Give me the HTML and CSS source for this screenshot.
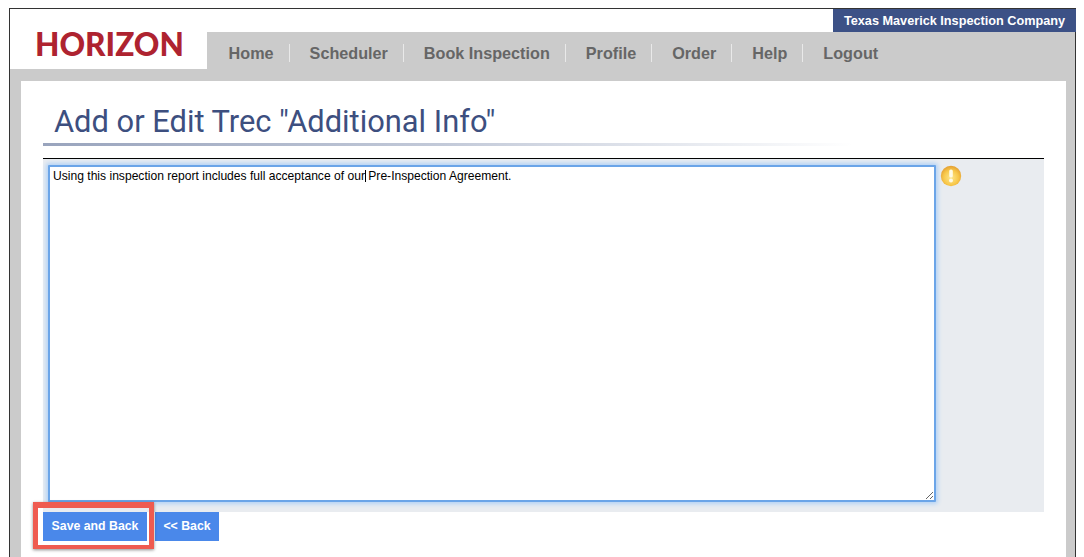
FILE: index.html
```html
<!DOCTYPE html>
<html lang="en">
<head>
<meta charset="utf-8">
<title>Add or Edit Trec "Additional Info"</title>
<link rel="stylesheet" href="styles.css">
</head>
<body>
<div class="frame">
  <header class="header">
    <div class="logo">HORIZON</div>
    <div class="header-right">
      <div class="company-row"><div class="company">Texas Maverick Inspection Company</div></div>
      <nav class="nav">
        <a class="nav-item" href="#">Home</a>
        <a class="nav-item" href="#">Scheduler</a>
        <a class="nav-item" href="#">Book Inspection</a>
        <a class="nav-item" href="#">Profile</a>
        <a class="nav-item" href="#">Order</a>
        <a class="nav-item" href="#">Help</a>
        <a class="nav-item last" href="#">Logout</a>
      </nav>
    </div>
  </header>
  <main class="content">
    <h1 class="title">Add or Edit Trec "Additional Info"</h1>
    <div class="title-rule"></div>
    <div class="panel">
      <div class="editor-wrap">
        <textarea class="editor" spellcheck="false">Using this inspection report includes full acceptance of our Pre-Inspection Agreement.</textarea>
        <span class="caret"></span>
      </div>
      <svg class="warn" width="22" height="22" viewBox="0 0 22 22" aria-hidden="true">
        <defs>
          <radialGradient id="warnFill" cx="50%" cy="58%" r="55%">
            <stop offset="0" stop-color="#fde78f"/>
            <stop offset="0.65" stop-color="#f8c84a"/>
            <stop offset="1" stop-color="#e6a435"/>
          </radialGradient>
        </defs>
        <circle cx="11" cy="11" r="10.2" fill="url(#warnFill)"/>
        <rect x="9.2" y="4.4" width="3.6" height="8.2" rx="1.7" fill="#fffbe6"/>
        <circle cx="11" cy="15.6" r="2" fill="#fffbe6"/>
      </svg>
    </div>
    <div class="actions">
      <button class="btn save" type="button">Save and Back</button>
      <button class="btn back" type="button">&lt;&lt; Back</button>
      <span class="highlight"></span>
    </div>
  </main>
</div>
</body>
</html>
```

FILE: styles.css
```css
html, body {
  margin: 0;
  height: 557px;
  overflow: hidden;
  background: #fff;
}
body {
  padding: 8px 8px 0 9px;
  box-sizing: border-box;
  font-family: "Liberation Sans", Arial, sans-serif;
}
.frame {
  height: 549px;
  box-sizing: border-box;
  background: #cbcbcb;
  border: 1px solid #333;
  border-width: 1px 1px 0 1px;
}
.header {
  display: grid;
  grid-template-columns: 197px 1fr;
  height: 72px;
}
.logo {
  height: 60px;
  background: #fff;
  box-sizing: border-box;
  padding: 16px 0 0 25px;
  font-family: Lato, sans-serif;
  font-weight: 900;
  font-size: 31.6px;
  line-height: 38px;
  color: #ae2330;
}
.header-right {
  display: flex;
  flex-direction: column;
}
.company-row {
  height: 23px;
  background: #fff;
  display: flex;
  justify-content: flex-end;
}
.company {
  width: 243px;
  margin-right: -1px;
  box-sizing: border-box;
  padding-top: 1px;
  background: #3c5186;
  color: #fff;
  font-weight: 700;
  font-size: 12.7px;
  line-height: 22px;
  text-align: center;
  white-space: nowrap;
}
.nav {
  display: flex;
  align-items: center;
  height: 18px;
  margin-top: 12px;
  padding-left: 1.6px;
}
.nav-item {
  padding: 0 15px 0 20px;
  border-right: 1px solid #e9e9e9;
  font-size: 16.2px;
  font-weight: 700;
  line-height: 18px;
  color: #666;
  text-decoration: none;
  white-space: nowrap;
}
.nav-item.last { border-right: 0; }
.content {
  margin: 0 9px 0 11px;
  height: 476px;
  background: #fff;
  padding: 0 22px;
}
.title {
  margin: 0;
  padding: 22px 0 0 11px;
  font-family: Roboto, sans-serif;
  font-weight: 400;
  font-size: 30.85px;
  line-height: 38px;
  color: #3d4f7f;
}
.title-rule {
  height: 3px;
  margin-top: 2px;
  width: 810px;
  background: linear-gradient(to right, #99a4bd 0%, #c3cad9 50%, #fff 100%);
}
.panel {
  display: flex;
  align-items: flex-start;
  margin-top: 12px;
  height: 354px;
  box-sizing: border-box;
  border-top: 1px solid #000;
  background: #e9ecf0;
  padding: 6px 0 0 5px;
}
.editor-wrap {
  position: relative;
  width: 888px;
  height: 337px;
}
.editor {
  display: block;
  width: 100%;
  height: 100%;
  box-sizing: border-box;
  margin: 0;
  padding: 2px 3px;
  border: 2px solid #6ba5e8;
  outline: 0;
  box-shadow: 0 0 4px 2px #b3d3f6;
  border-radius: 1px;
  background: #fff;
  color: #000;
  font-family: "Liberation Sans", Arial, sans-serif;
  font-size: 12.1px;
  line-height: 14px;
}
.caret {
  position: absolute;
  left: 317px;
  top: 5px;
  width: 1px;
  height: 12px;
  background: #000;
}
.warn {
  margin: 0 0 0 4px;
}
.actions {
  position: relative;
  display: flex;
  gap: 8px;
}
.btn {
  height: 29px;
  border: 0;
  padding: 0 0 2px;
  background: #4a88ea;
  color: #fff;
  font-family: "Liberation Sans", Arial, sans-serif;
  font-weight: 700;
  font-size: 12.3px;
}
.save { width: 104px; }
.back { width: 64px; }
.highlight {
  position: absolute;
  left: -10px;
  top: -10px;
  width: 111px;
  height: 37px;
  border: solid #ef5b50;
  border-width: 6px 5px 4px;
  box-shadow: 0 1px 3px rgba(0, 0, 0, .45);
}
```
